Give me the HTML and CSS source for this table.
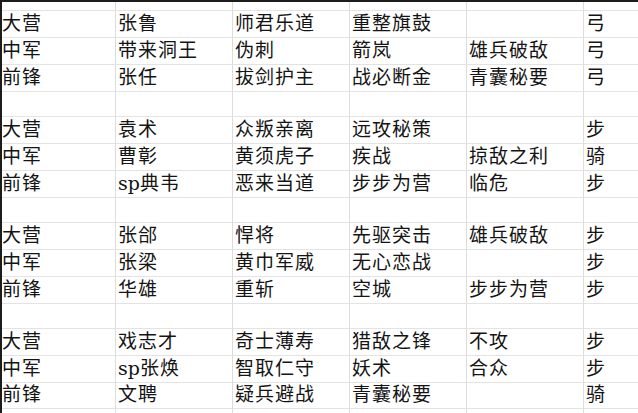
FILE: index.html
```html
<!DOCTYPE html>
<html lang="zh">
<head>
<meta charset="utf-8">
<link rel="stylesheet" href="styles.css">
</head>
<body>
<div class="topbar"></div>
<div class="sheet">
  <div class="row r-top"><div class="c"></div><div class="c"></div><div class="c"></div><div class="c"></div><div class="c"></div><div class="c"></div></div>

  <div class="row"><div class="c">大营</div><div class="c">张鲁</div><div class="c">师君乐道</div><div class="c">重整旗鼓</div><div class="c"></div><div class="c">弓</div></div>
  <div class="row"><div class="c">中军</div><div class="c">带来洞王</div><div class="c">伪刺</div><div class="c">箭岚</div><div class="c">雄兵破敌</div><div class="c">弓</div></div>
  <div class="row"><div class="c">前锋</div><div class="c">张任</div><div class="c">拔剑护主</div><div class="c">战必断金</div><div class="c">青囊秘要</div><div class="c">弓</div></div>
  <div class="row r-gap"><div class="c"></div><div class="c"></div><div class="c"></div><div class="c"></div><div class="c"></div><div class="c"></div></div>

  <div class="row"><div class="c">大营</div><div class="c">袁术</div><div class="c">众叛亲离</div><div class="c">远攻秘策</div><div class="c"></div><div class="c">步</div></div>
  <div class="row"><div class="c">中军</div><div class="c">曹彰</div><div class="c">黄须虎子</div><div class="c">疾战</div><div class="c">掠敌之利</div><div class="c">骑</div></div>
  <div class="row"><div class="c">前锋</div><div class="c"><span class="lat">sp</span>典韦</div><div class="c">恶来当道</div><div class="c">步步为营</div><div class="c">临危</div><div class="c">步</div></div>
  <div class="row r-gap"><div class="c"></div><div class="c"></div><div class="c"></div><div class="c"></div><div class="c"></div><div class="c"></div></div>

  <div class="row"><div class="c">大营</div><div class="c">张郃</div><div class="c">悍将</div><div class="c">先驱突击</div><div class="c">雄兵破敌</div><div class="c">步</div></div>
  <div class="row"><div class="c">中军</div><div class="c">张梁</div><div class="c">黄巾军威</div><div class="c">无心恋战</div><div class="c"></div><div class="c">步</div></div>
  <div class="row"><div class="c">前锋</div><div class="c">华雄</div><div class="c">重斩</div><div class="c">空城</div><div class="c">步步为营</div><div class="c">步</div></div>
  <div class="row r-gap"><div class="c"></div><div class="c"></div><div class="c"></div><div class="c"></div><div class="c"></div><div class="c"></div></div>

  <div class="row"><div class="c">大营</div><div class="c">戏志才</div><div class="c">奇士薄寿</div><div class="c">猎敌之锋</div><div class="c">不攻</div><div class="c">步</div></div>
  <div class="row"><div class="c">中军</div><div class="c"><span class="lat">sp</span>张焕</div><div class="c">智取仁守</div><div class="c">妖术</div><div class="c">合众</div><div class="c">步</div></div>
  <div class="row r-last"><div class="c">前锋</div><div class="c">文聘</div><div class="c">疑兵避战</div><div class="c">青囊秘要</div><div class="c"></div><div class="c">骑</div></div>
  <div class="row r-end"><div class="c"></div><div class="c"></div><div class="c"></div><div class="c"></div><div class="c"></div><div class="c"></div></div>
</div>
</body>
</html>
```
FILE: styles.css
```css
html, body {
  margin: 0;
  padding: 0;
  background: #ffffff;
  overflow: hidden;
}

.topbar {
  height: 2px;
  background: #1c1c1c;
}

.sheet {
  border-left: 2px solid #1c1c1c;
  font-family: "DejaVu Serif", "Noto Sans CJK SC", serif;
  font-size: 19px;
  color: #141414;
}

.row {
  display: grid;
  grid-template-columns: 114px 117px 117px 117px 117px 54px;
  height: 27px;
}

.r-top { height: 9px; }
.r-gap { height: 25px; }
.r-last { height: 26px; }
.r-end { height: 6px; }

.c {
  box-sizing: border-box;
  border-right: 1px solid #dcdcdc;
  border-bottom: 1px solid #e3e3e3;
  display: flex;
  align-items: center;
  padding: 0 0 2px 2px;
  white-space: nowrap;
  overflow: hidden;
  line-height: 1;
  letter-spacing: 1px;
}

.lat {
  letter-spacing: 0;
}

.row .c:first-child {
  padding-left: 0;
}

.row .c:last-child {
  border-right: none;
}
```
